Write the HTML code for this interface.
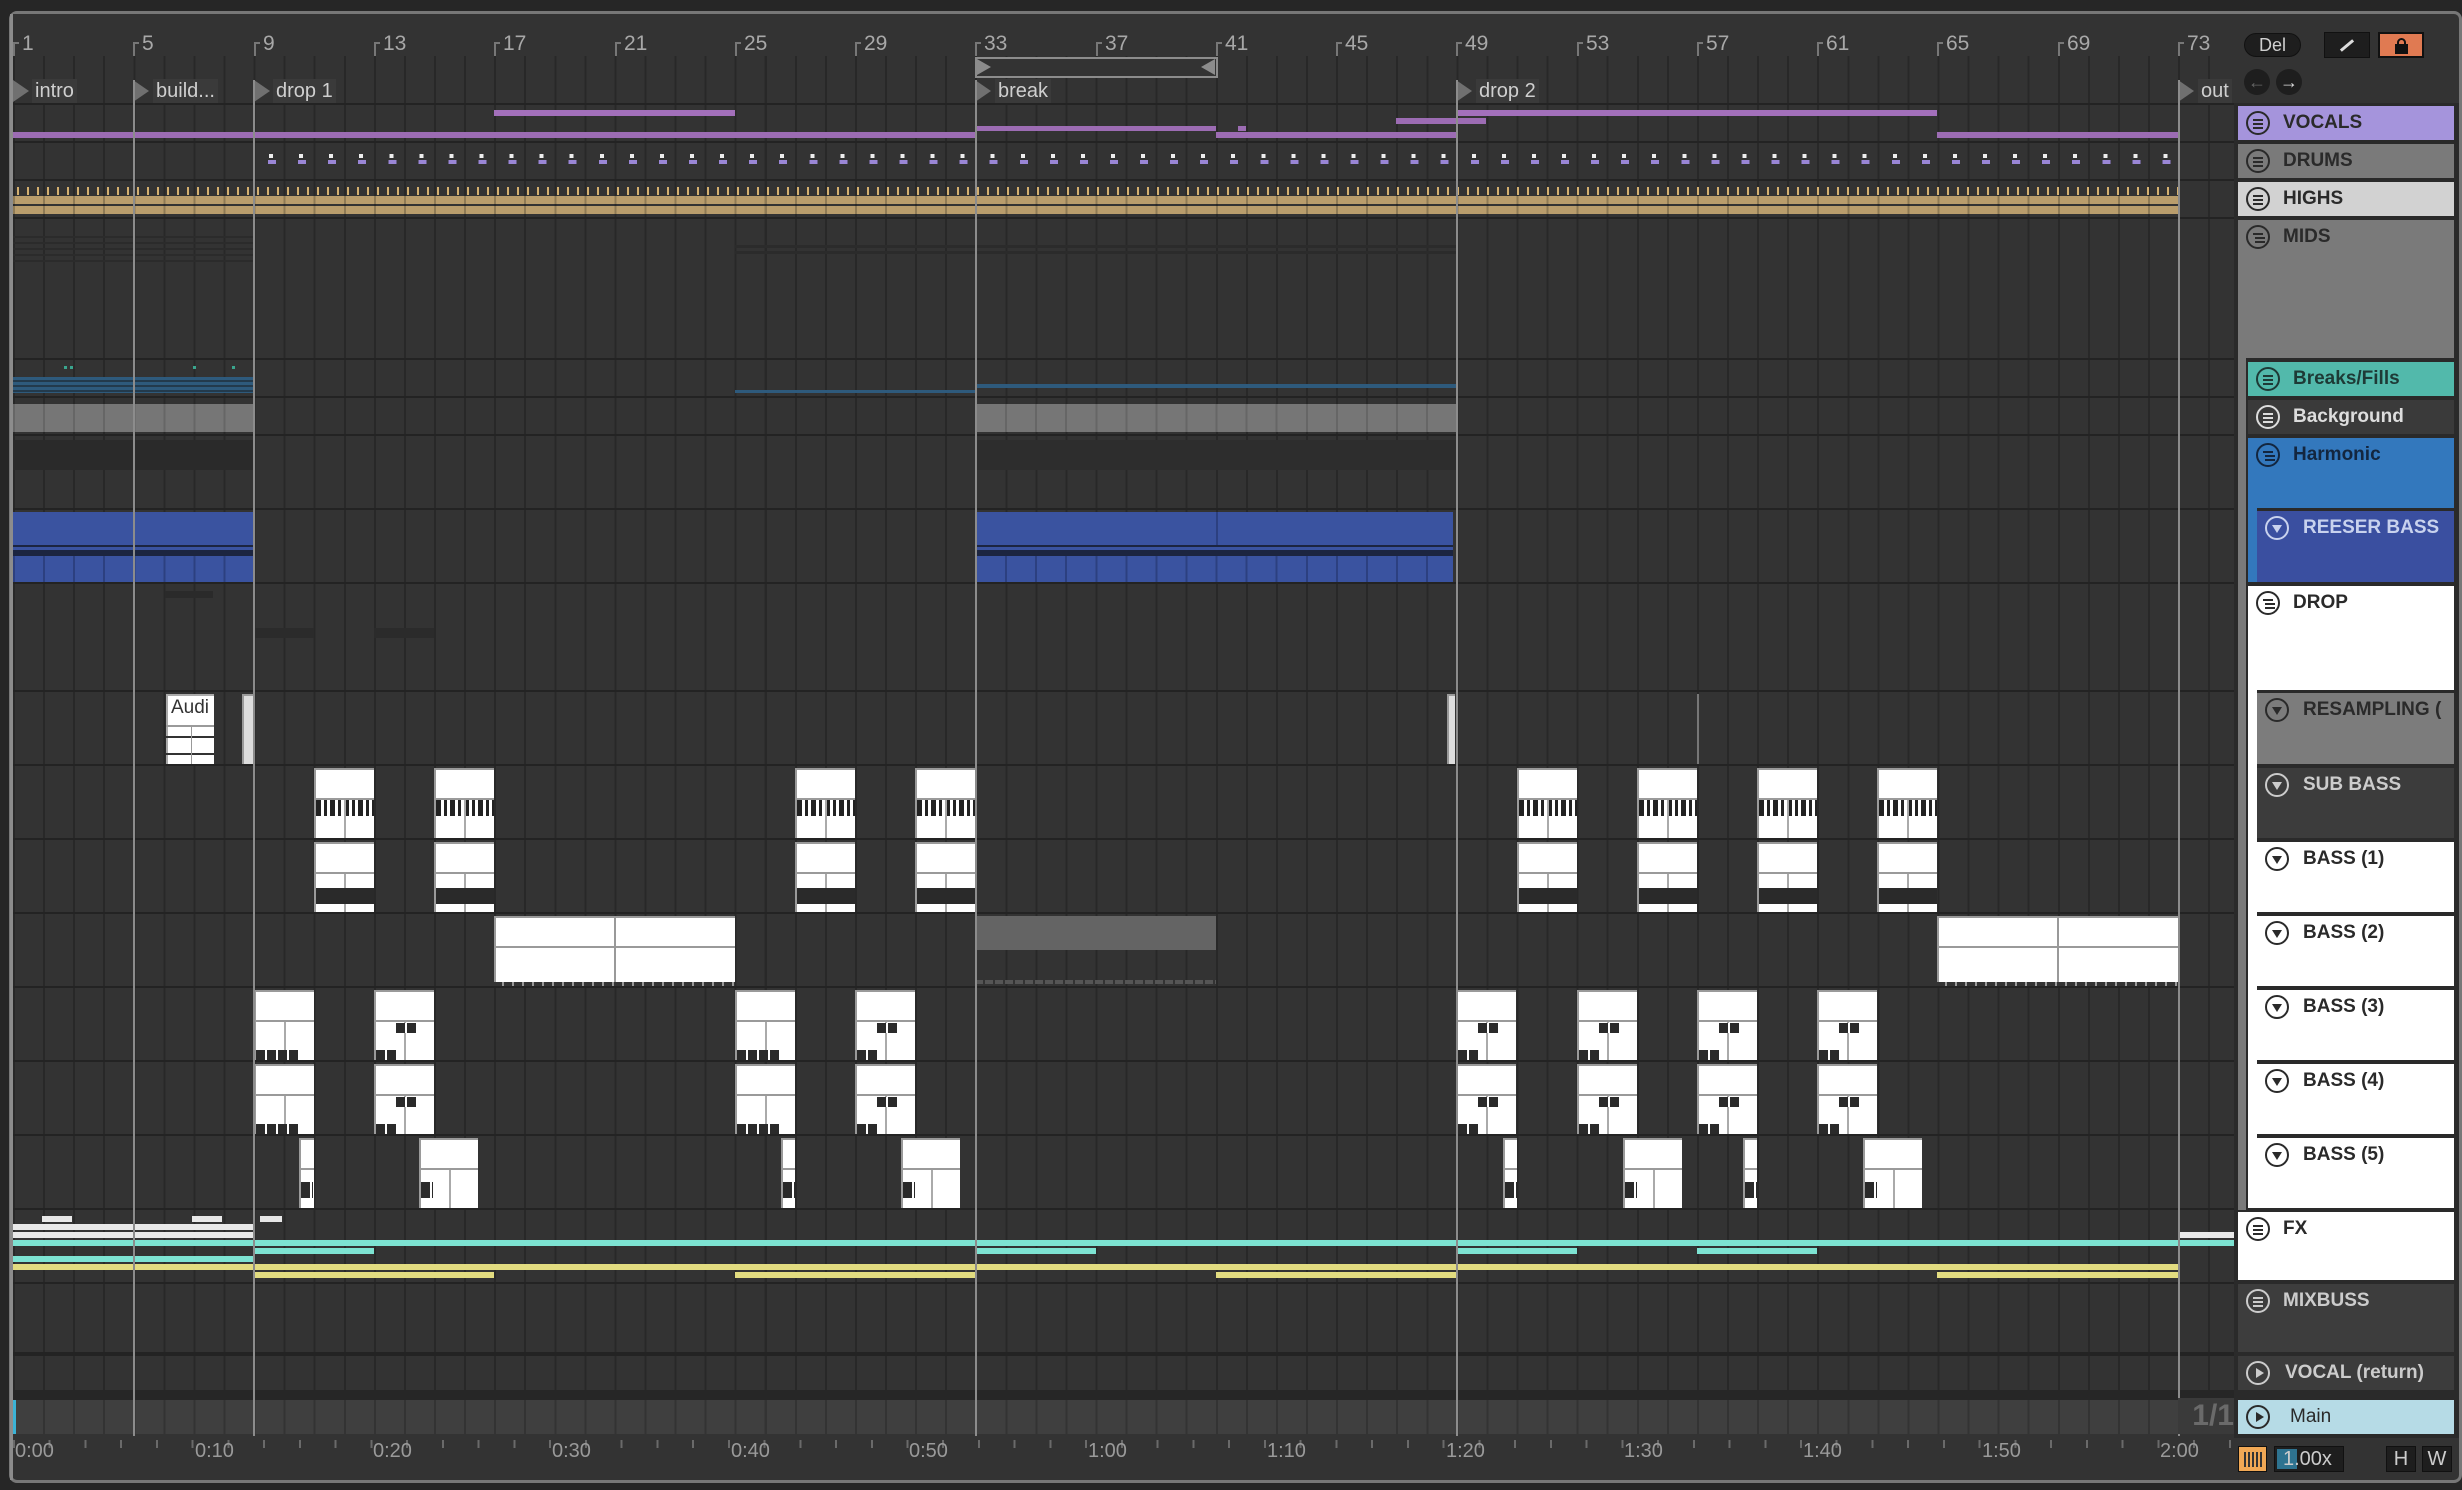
<!DOCTYPE html>
<html><head><meta charset="utf-8">
<style>
*{margin:0;padding:0;box-sizing:border-box}
body{width:2462px;height:1490px;background:#262626;position:relative;overflow:hidden;font-family:"Liberation Sans",sans-serif}
.a{position:absolute}
.row{position:absolute;left:13px;width:2221px;background:repeating-linear-gradient(90deg,#282828 0 2px,#333 2px 30.07px)}
.bn{position:absolute;top:32px;font-size:21px;color:#a8a8a8}
.tk{position:absolute;top:42px;width:6px;height:14px;border-left:2px solid #777;border-top:2px solid #777}
.loc{position:absolute;top:80px;width:0;height:0;border-top:11px solid transparent;border-bottom:11px solid transparent;border-left:16px solid #707070}
.ll{position:absolute;top:79px;height:24px;background:#3a3a3a;color:#cfcfcf;font-size:20px;padding:0 3px;line-height:24px}
.vl{position:absolute;top:80px;width:2px;height:1356px;background:#8c8c8c}
.c{position:absolute;background:#fff;box-shadow:inset 2px 2px 0 #9a9a9a;overflow:hidden}
.c .h{position:absolute;left:0;right:0;top:30px;height:2px;background:#9a9a9a}
.c .m{position:absolute;top:32px;bottom:0;left:50%;width:2px;background:#aaa}
.c .k{position:absolute;left:2px;right:0;top:32px;height:16px;background:repeating-linear-gradient(90deg,#222 0 5px,#fff 5px 8px,#222 8px 11px,#fff 11px 14px)}
.c .d{position:absolute;left:2px;right:0;top:46px;height:16px;background:#2a2a2a}
.c .s{position:absolute;height:10px;background:repeating-linear-gradient(90deg,#2a2a2a 0 9px,#fff 9px 11px)}
.hd{position:absolute;height:34px;font-weight:bold;font-size:19px;color:#2a2a2a;line-height:34px}
.ic{position:absolute;width:24px;height:24px;border:2px solid #2a2a2a;border-radius:50%;top:5px}
.ic i{position:absolute;left:5px;width:10px;height:2px;background:currentColor}
.tri{position:absolute;left:5px;top:7px;border-left:5px solid transparent;border-right:5px solid transparent;border-top:8px solid currentColor}
.ply{position:absolute;left:8px;top:5px;border-top:5px solid transparent;border-bottom:5px solid transparent;border-left:8px solid currentColor}
.tl{position:absolute;top:1440px;font-size:20px;color:#9a9a9a}
</style></head><body>
<!-- frame -->
<div class="a" style="left:9px;top:11px;width:2453px;height:1472px;border:3px solid #777;border-radius:8px;background:#333"></div>
<div class="a" style="left:12px;top:14px;width:2222px;height:90px;background:#333"></div>
<!-- ruler ticks -->
<div class="a" style="left:13px;top:56px;width:2221px;height:24px;background:repeating-linear-gradient(90deg,#282828 0 2px,#333 2px 30.07px)"></div>
<div class="a" style="left:13px;top:80px;width:2221px;height:23px;background:repeating-linear-gradient(90deg,#282828 0 2px,#333 2px 30.07px)"></div>
<div class="tk" style="left:13px"></div><div class="bn" style="left:22px">1</div>
<div class="tk" style="left:133px"></div><div class="bn" style="left:142px">5</div>
<div class="tk" style="left:254px"></div><div class="bn" style="left:263px">9</div>
<div class="tk" style="left:374px"></div><div class="bn" style="left:383px">13</div>
<div class="tk" style="left:494px"></div><div class="bn" style="left:503px">17</div>
<div class="tk" style="left:615px"></div><div class="bn" style="left:624px">21</div>
<div class="tk" style="left:735px"></div><div class="bn" style="left:744px">25</div>
<div class="tk" style="left:855px"></div><div class="bn" style="left:864px">29</div>
<div class="tk" style="left:975px"></div><div class="bn" style="left:984px">33</div>
<div class="tk" style="left:1096px"></div><div class="bn" style="left:1105px">37</div>
<div class="tk" style="left:1216px"></div><div class="bn" style="left:1225px">41</div>
<div class="tk" style="left:1336px"></div><div class="bn" style="left:1345px">45</div>
<div class="tk" style="left:1456px"></div><div class="bn" style="left:1465px">49</div>
<div class="tk" style="left:1577px"></div><div class="bn" style="left:1586px">53</div>
<div class="tk" style="left:1697px"></div><div class="bn" style="left:1706px">57</div>
<div class="tk" style="left:1817px"></div><div class="bn" style="left:1826px">61</div>
<div class="tk" style="left:1937px"></div><div class="bn" style="left:1946px">65</div>
<div class="tk" style="left:2058px"></div><div class="bn" style="left:2067px">69</div>
<div class="tk" style="left:2178px"></div><div class="bn" style="left:2187px">73</div>
<!-- loop brace -->
<div class="a" style="left:975px;top:57px;width:243px;height:21px;border:2px solid #8c8c8c;background:#333"></div>
<div class="a" style="left:977px;top:59px;border-top:8px solid transparent;border-bottom:8px solid transparent;border-left:14px solid #8c8c8c"></div>
<div class="a" style="left:1201px;top:59px;border-top:8px solid transparent;border-bottom:8px solid transparent;border-right:14px solid #8c8c8c"></div>
<!-- locators -->
<div class="loc" style="left:13px"></div><div class="ll" style="left:32px">intro</div>
<div class="loc" style="left:133px"></div><div class="ll" style="left:153px">build...</div>
<div class="loc" style="left:254px"></div><div class="ll" style="left:273px">drop 1</div>
<div class="loc" style="left:975px"></div><div class="ll" style="left:995px">break</div>
<div class="loc" style="left:1456px"></div><div class="ll" style="left:1476px">drop 2</div>
<div class="loc" style="left:2178px"></div><div class="ll" style="left:2198px">out</div>

<!-- track area -->
<div class="a" style="left:13px;top:103px;width:2221px;height:1331px;background:#232323"></div>
<div class="row" style="top:105px;height:36px"></div>
<div class="row" style="top:143px;height:36px"></div>
<div class="row" style="top:181px;height:36px"></div>
<div class="row" style="top:219px;height:139px"></div>
<div class="row" style="top:360px;height:36px"></div>
<div class="row" style="top:398px;height:36px"></div>
<div class="row" style="top:436px;height:72px"></div>
<div class="row" style="top:510px;height:72px"></div>
<div class="row" style="top:584px;height:106px"></div>
<div class="row" style="top:692px;height:72px"></div>
<div class="row" style="top:766px;height:72px"></div>
<div class="row" style="top:840px;height:72px"></div>
<div class="row" style="top:914px;height:72px"></div>
<div class="row" style="top:988px;height:72px"></div>
<div class="row" style="top:1062px;height:72px"></div>
<div class="row" style="top:1136px;height:72px"></div>
<div class="row" style="top:1210px;height:72px"></div>
<div class="row" style="top:1284px;height:68px"></div>
<div class="row" style="top:1356px;height:34px"></div>
<div class="a" style="left:13px;top:1390px;width:2221px;height:10px;background:#262626"></div>
<div class="row" style="top:1400px;height:34px;background:repeating-linear-gradient(90deg,#333 0 2px,#3f3f3f 2px 30.07px)"></div>
<div class="a" style="left:13px;top:1400px;width:3px;height:34px;background:#3bb3d6"></div>

<!-- VOCALS -->
<div class="a" style="left:13px;top:132px;width:722px;height:6px;background:#9c6cb3"></div>
<div class="a" style="left:494px;top:110px;width:241px;height:6px;background:#a370bb"></div>
<div class="a" style="left:735px;top:132px;width:240px;height:6px;background:#9c6cb3"></div>
<div class="a" style="left:975px;top:126px;width:241px;height:5px;background:#9c6cb3"></div>
<div class="a" style="left:1238px;top:126px;width:8px;height:5px;background:#9c6cb3"></div>
<div class="a" style="left:1216px;top:132px;width:240px;height:6px;background:#9c6cb3"></div>
<div class="a" style="left:1396px;top:118px;width:90px;height:6px;background:#9c6cb3"></div>
<div class="a" style="left:1456px;top:110px;width:481px;height:6px;background:#a370bb"></div>
<div class="a" style="left:1937px;top:132px;width:241px;height:6px;background:#9c6cb3"></div>
<!-- DRUMS -->
<div class="a" style="left:254px;top:154px;width:1924px;height:4px;background:repeating-linear-gradient(90deg,transparent 0 15px,#eee 15px 19px,transparent 19px 30.07px)"></div>
<div class="a" style="left:254px;top:160px;width:1924px;height:4px;background:repeating-linear-gradient(90deg,transparent 0 14px,#9a86d6 14px 22px,transparent 22px 30.07px)"></div>
<!-- HIGHS -->
<div class="a" style="left:13px;top:187px;width:2165px;height:8px;background:repeating-linear-gradient(90deg,transparent 0 4px,#d4b070 4px 6px,transparent 6px 10px)"></div>
<div class="a" style="left:13px;top:196px;width:2165px;height:8px;background:repeating-linear-gradient(90deg,#8e7a55 0 2px,#b99d6c 2px 30.07px)"></div>
<div class="a" style="left:13px;top:206px;width:2165px;height:8px;background:repeating-linear-gradient(90deg,#8e7a55 0 2px,#b99d6c 2px 30.07px)"></div>
<!-- MIDS faint -->
<div class="a" style="left:13px;top:236px;width:241px;height:30px;background:repeating-linear-gradient(180deg,#2b2b2b 0 2px,transparent 2px 6px)"></div>
<div class="a" style="left:735px;top:245px;width:721px;height:12px;background:repeating-linear-gradient(180deg,#2b2b2b 0 3px,transparent 3px 6px)"></div>
<!-- Breaks -->
<div class="a" style="left:13px;top:377px;width:241px;height:16px;background:repeating-linear-gradient(180deg,#2e5a7c 0 3px,#233a4c 3px 5px)"></div>
<div class="a" style="left:64px;top:366px;width:3px;height:3px;background:#3aa58e"></div>
<div class="a" style="left:70px;top:366px;width:3px;height:3px;background:#3aa58e"></div>
<div class="a" style="left:193px;top:366px;width:3px;height:3px;background:#3aa58e"></div>
<div class="a" style="left:232px;top:366px;width:3px;height:3px;background:#3aa58e"></div>
<div class="a" style="left:735px;top:390px;width:240px;height:3px;background:#2e5a7c"></div>
<div class="a" style="left:975px;top:384px;width:481px;height:4px;background:#2e5a7c"></div>
<!-- Background -->
<div class="a" style="left:13px;top:404px;width:241px;height:28px;background:repeating-linear-gradient(90deg,#666 0 2px,#767676 2px 30.07px)"></div>
<div class="a" style="left:975px;top:404px;width:481px;height:28px;background:repeating-linear-gradient(90deg,#666 0 2px,#767676 2px 30.07px)"></div>
<div class="a" style="left:13px;top:440px;width:241px;height:30px;background:#2a2a2a"></div>
<div class="a" style="left:975px;top:440px;width:481px;height:30px;background:#2d2d2d"></div>
<!-- REESER -->
<div class="a" style="left:13px;top:512px;width:241px;height:33px;background:#3a53a0"></div>
<div class="a" style="left:13px;top:545px;width:241px;height:11px;background:repeating-linear-gradient(180deg,#1c2540 0 2px,#3a53a0 2px 5px,#1c2540 5px 11px)"></div>
<div class="a" style="left:13px;top:556px;width:241px;height:26px;background:repeating-linear-gradient(90deg,#2c4080 0 2px,#3a53a0 2px 30.07px)"></div>
<div class="a" style="left:975px;top:512px;width:478px;height:33px;background:#3a53a0"></div>
<div class="a" style="left:975px;top:545px;width:478px;height:11px;background:repeating-linear-gradient(180deg,#1c2540 0 2px,#3a53a0 2px 5px,#1c2540 5px 11px)"></div>
<div class="a" style="left:975px;top:556px;width:478px;height:26px;background:repeating-linear-gradient(90deg,#2c4080 0 2px,#3a53a0 2px 30.07px)"></div>
<div class="a" style="left:1216px;top:512px;width:2px;height:33px;background:#2c4080"></div>
<!-- DROP faint -->
<div class="a" style="left:165px;top:591px;width:48px;height:7px;background:#2a2a2a"></div>
<div class="a" style="left:254px;top:628px;width:60px;height:10px;background:#2b2b2b"></div>
<div class="a" style="left:374px;top:628px;width:60px;height:10px;background:#2b2b2b"></div>
<!-- RESAMPLING audio clips -->
<div class="c" style="left:166px;top:694px;width:48px;height:70px;box-shadow:inset 2px 2px 0 #aaa">
<div class="a" style="left:5px;top:3px;font-size:19px;color:#333">Audi</div><div class="h" style="top:31px"></div>
<div class="a" style="left:0;right:0;top:42px;height:2px;background:#333"></div><div class="a" style="left:0;right:0;top:59px;height:2px;background:#333"></div><div class="a" style="left:25px;top:33px;bottom:0;width:1px;background:#999"></div></div>
<div class="c" style="left:242px;top:694px;width:12px;height:70px;background:#ddd"></div>
<div class="c" style="left:1447px;top:694px;width:8px;height:70px;background:#ddd"></div>
<div class="a" style="left:1697px;top:694px;width:2px;height:70px;background:#777"></div>

<!-- SUB BASS piano clips -->
<div class="c" style="left:314px;top:768px;width:60px;height:70px"><div class="h"></div><div class="k"></div><div class="m"></div></div>
<div class="c" style="left:434px;top:768px;width:60px;height:70px"><div class="h"></div><div class="k"></div><div class="m"></div></div>
<div class="c" style="left:795px;top:768px;width:60px;height:70px"><div class="h"></div><div class="k"></div><div class="m"></div></div>
<div class="c" style="left:915px;top:768px;width:60px;height:70px"><div class="h"></div><div class="k"></div><div class="m"></div></div>
<div class="c" style="left:1517px;top:768px;width:60px;height:70px"><div class="h"></div><div class="k"></div><div class="m"></div></div>
<div class="c" style="left:1637px;top:768px;width:60px;height:70px"><div class="h"></div><div class="k"></div><div class="m"></div></div>
<div class="c" style="left:1757px;top:768px;width:60px;height:70px"><div class="h"></div><div class="k"></div><div class="m"></div></div>
<div class="c" style="left:1877px;top:768px;width:60px;height:70px"><div class="h"></div><div class="k"></div><div class="m"></div></div>
<!-- BASS1 -->
<div class="c" style="left:314px;top:842px;width:60px;height:70px"><div class="h"></div><div class="m"></div><div class="d"></div></div>
<div class="c" style="left:434px;top:842px;width:60px;height:70px"><div class="h"></div><div class="m"></div><div class="d"></div></div>
<div class="c" style="left:795px;top:842px;width:60px;height:70px"><div class="h"></div><div class="m"></div><div class="d"></div></div>
<div class="c" style="left:915px;top:842px;width:60px;height:70px"><div class="h"></div><div class="m"></div><div class="d"></div></div>
<div class="c" style="left:1517px;top:842px;width:60px;height:70px"><div class="h"></div><div class="m"></div><div class="d"></div></div>
<div class="c" style="left:1637px;top:842px;width:60px;height:70px"><div class="h"></div><div class="m"></div><div class="d"></div></div>
<div class="c" style="left:1757px;top:842px;width:60px;height:70px"><div class="h"></div><div class="m"></div><div class="d"></div></div>
<div class="c" style="left:1877px;top:842px;width:60px;height:70px"><div class="h"></div><div class="m"></div><div class="d"></div></div>
<!-- BASS2 -->
<div class="c" style="left:494px;top:916px;width:241px;height:70px"><div class="h"></div><div class="a" style="left:120px;top:0;bottom:0;width:2px;background:#999"></div><div class="a" style="left:0;right:0;bottom:0;height:4px;background:repeating-linear-gradient(90deg,#333 0 8px,#999 8px 10px)"></div></div>
<div class="a" style="left:975px;top:916px;width:241px;height:34px;background:#646464"></div>
<div class="a" style="left:975px;top:980px;width:241px;height:4px;background:repeating-linear-gradient(90deg,#555 0 8px,#333 8px 10px)"></div>
<div class="c" style="left:1937px;top:916px;width:241px;height:70px"><div class="h"></div><div class="a" style="left:120px;top:0;bottom:0;width:2px;background:#999"></div><div class="a" style="left:0;right:0;bottom:0;height:4px;background:repeating-linear-gradient(90deg,#333 0 8px,#999 8px 10px)"></div></div>
<!-- BASS3 -->
<div class="c" style="left:254px;top:990px;width:60px;height:70px"><div class="h"></div><div class="m"></div><div class="s" style="left:2px;top:60px;width:44px"></div></div>
<div class="c" style="left:374px;top:990px;width:60px;height:70px"><div class="h"></div><div class="m"></div><div class="s" style="left:22px;top:33px;width:22px"></div><div class="s" style="left:2px;top:60px;width:22px"></div></div>
<div class="c" style="left:735px;top:990px;width:60px;height:70px"><div class="h"></div><div class="m"></div><div class="s" style="left:2px;top:60px;width:44px"></div></div>
<div class="c" style="left:855px;top:990px;width:60px;height:70px"><div class="h"></div><div class="m"></div><div class="s" style="left:22px;top:33px;width:22px"></div><div class="s" style="left:2px;top:60px;width:22px"></div></div>
<div class="c" style="left:1456px;top:990px;width:60px;height:70px"><div class="h"></div><div class="m"></div><div class="s" style="left:22px;top:33px;width:22px"></div><div class="s" style="left:2px;top:60px;width:22px"></div></div>
<div class="c" style="left:1577px;top:990px;width:60px;height:70px"><div class="h"></div><div class="m"></div><div class="s" style="left:22px;top:33px;width:22px"></div><div class="s" style="left:2px;top:60px;width:22px"></div></div>
<div class="c" style="left:1697px;top:990px;width:60px;height:70px"><div class="h"></div><div class="m"></div><div class="s" style="left:22px;top:33px;width:22px"></div><div class="s" style="left:2px;top:60px;width:22px"></div></div>
<div class="c" style="left:1817px;top:990px;width:60px;height:70px"><div class="h"></div><div class="m"></div><div class="s" style="left:22px;top:33px;width:22px"></div><div class="s" style="left:2px;top:60px;width:22px"></div></div>
<!-- BASS4 -->
<div class="c" style="left:254px;top:1064px;width:60px;height:70px"><div class="h"></div><div class="m"></div><div class="s" style="left:2px;top:60px;width:44px"></div></div>
<div class="c" style="left:374px;top:1064px;width:60px;height:70px"><div class="h"></div><div class="m"></div><div class="s" style="left:22px;top:33px;width:22px"></div><div class="s" style="left:2px;top:60px;width:22px"></div></div>
<div class="c" style="left:735px;top:1064px;width:60px;height:70px"><div class="h"></div><div class="m"></div><div class="s" style="left:2px;top:60px;width:44px"></div></div>
<div class="c" style="left:855px;top:1064px;width:60px;height:70px"><div class="h"></div><div class="m"></div><div class="s" style="left:22px;top:33px;width:22px"></div><div class="s" style="left:2px;top:60px;width:22px"></div></div>
<div class="c" style="left:1456px;top:1064px;width:60px;height:70px"><div class="h"></div><div class="m"></div><div class="s" style="left:22px;top:33px;width:22px"></div><div class="s" style="left:2px;top:60px;width:22px"></div></div>
<div class="c" style="left:1577px;top:1064px;width:60px;height:70px"><div class="h"></div><div class="m"></div><div class="s" style="left:22px;top:33px;width:22px"></div><div class="s" style="left:2px;top:60px;width:22px"></div></div>
<div class="c" style="left:1697px;top:1064px;width:60px;height:70px"><div class="h"></div><div class="m"></div><div class="s" style="left:22px;top:33px;width:22px"></div><div class="s" style="left:2px;top:60px;width:22px"></div></div>
<div class="c" style="left:1817px;top:1064px;width:60px;height:70px"><div class="h"></div><div class="m"></div><div class="s" style="left:22px;top:33px;width:22px"></div><div class="s" style="left:2px;top:60px;width:22px"></div></div>
<!-- BASS5 -->
<div class="c" style="left:299px;top:1138px;width:15px;height:70px"><div class="h"></div><div class="s" style="left:2px;top:44px;width:12px;height:16px"></div></div>
<div class="c" style="left:419px;top:1138px;width:59px;height:70px"><div class="h"></div><div class="m"></div><div class="s" style="left:2px;top:44px;width:12px;height:16px"></div></div>
<div class="c" style="left:781px;top:1138px;width:14px;height:70px"><div class="h"></div><div class="s" style="left:2px;top:44px;width:12px;height:16px"></div></div>
<div class="c" style="left:901px;top:1138px;width:59px;height:70px"><div class="h"></div><div class="m"></div><div class="s" style="left:2px;top:44px;width:12px;height:16px"></div></div>
<div class="c" style="left:1503px;top:1138px;width:14px;height:70px"><div class="h"></div><div class="s" style="left:2px;top:44px;width:12px;height:16px"></div></div>
<div class="c" style="left:1623px;top:1138px;width:59px;height:70px"><div class="h"></div><div class="m"></div><div class="s" style="left:2px;top:44px;width:12px;height:16px"></div></div>
<div class="c" style="left:1743px;top:1138px;width:14px;height:70px"><div class="h"></div><div class="s" style="left:2px;top:44px;width:12px;height:16px"></div></div>
<div class="c" style="left:1863px;top:1138px;width:59px;height:70px"><div class="h"></div><div class="m"></div><div class="s" style="left:2px;top:44px;width:12px;height:16px"></div></div>
<!-- FX -->
<div class="a" style="left:42px;top:1216px;width:30px;height:6px;background:#e8e8e8"></div>
<div class="a" style="left:192px;top:1216px;width:30px;height:6px;background:#e8e8e8"></div>
<div class="a" style="left:260px;top:1216px;width:22px;height:6px;background:#e8e8e8"></div>
<div class="a" style="left:13px;top:1224px;width:240px;height:6px;background:#e8e8e8"></div>
<div class="a" style="left:13px;top:1232px;width:240px;height:6px;background:#e8e8e8"></div>
<div class="a" style="left:13px;top:1240px;width:2165px;height:6px;background:#7de3d2"></div>
<div class="a" style="left:254px;top:1248px;width:120px;height:6px;background:#7de3d2"></div>
<div class="a" style="left:975px;top:1248px;width:121px;height:6px;background:#7de3d2"></div>
<div class="a" style="left:1456px;top:1248px;width:121px;height:6px;background:#7de3d2"></div>
<div class="a" style="left:1697px;top:1248px;width:120px;height:6px;background:#7de3d2"></div>
<div class="a" style="left:13px;top:1256px;width:240px;height:6px;background:#7de3d2"></div>
<div class="a" style="left:13px;top:1264px;width:2165px;height:6px;background:#e2dc80"></div>
<div class="a" style="left:254px;top:1272px;width:240px;height:6px;background:#e2dc80"></div>
<div class="a" style="left:735px;top:1272px;width:240px;height:6px;background:#e2dc80"></div>
<div class="a" style="left:1216px;top:1272px;width:240px;height:6px;background:#e2dc80"></div>
<div class="a" style="left:1937px;top:1272px;width:241px;height:6px;background:#e2dc80"></div>
<div class="a" style="left:2178px;top:1232px;width:56px;height:6px;background:#e8e8e8"></div>
<div class="a" style="left:2178px;top:1240px;width:56px;height:6px;background:#7de3d2"></div>

<!-- locator lines -->
<div class="a" style="left:10px;top:14px;width:3px;height:1466px;background:#8c8c8c"></div>
<div class="vl" style="left:133px"></div>
<div class="vl" style="left:253px"></div>
<div class="vl" style="left:975px"></div>
<div class="vl" style="left:1456px"></div>
<div class="vl" style="left:2178px"></div>

<div class="a" style="left:2178px;top:1398px;width:56px;height:36px;background:#3a3a3a;color:#6a6a6a;font-size:30px;font-weight:bold;text-align:right;line-height:36px">1/1</div>

<!-- time ruler -->
<div class="a" style="left:13px;top:1436px;width:2221px;height:12px;background:repeating-linear-gradient(90deg,#6a6a6a 0 2px,transparent 2px 35.74px)"></div>
<div class="a" style="left:13px;top:1436px;width:2221px;height:4px;background:#333"></div>
<div class="tl" style="left:15px">0:00</div><div class="tl" style="left:195px">0:10</div><div class="tl" style="left:373px">0:20</div>
<div class="tl" style="left:552px">0:30</div><div class="tl" style="left:731px">0:40</div><div class="tl" style="left:909px">0:50</div>
<div class="tl" style="left:1088px">1:00</div><div class="tl" style="left:1267px">1:10</div><div class="tl" style="left:1446px">1:20</div>
<div class="tl" style="left:1624px">1:30</div><div class="tl" style="left:1803px">1:40</div><div class="tl" style="left:1982px">1:50</div>
<div class="tl" style="left:2160px">2:00</div>

<!-- right panel -->
<div class="a" style="left:2234px;top:103px;width:225px;height:1335px;background:#2a2a2a"></div>
<div class="a" style="left:2244px;top:33px;width:57px;height:24px;border-radius:12px;background:#1e1e1e;border:1px solid #111;color:#d0d0d0;font-size:18px;text-align:center;line-height:22px">Del</div>
<div class="a" style="left:2324px;top:32px;width:46px;height:26px;background:#1e1e1e;border:1px solid #111"><div class="a" style="left:14px;top:11px;width:16px;height:3px;background:#ddd;transform:rotate(-40deg)"></div></div>
<div class="a" style="left:2378px;top:32px;width:46px;height:26px;background:#e07a52;border:2px solid #111"><div class="a" style="left:15px;top:10px;width:13px;height:10px;background:#111"></div><div class="a" style="left:17px;top:4px;width:9px;height:9px;border:2px solid #111;border-radius:5px 5px 0 0"></div></div>
<div class="a" style="left:2244px;top:69px;width:26px;height:26px;border-radius:50%;background:#1e1e1e;color:#666;font-size:18px;text-align:center;line-height:26px">&#8592;</div>
<div class="a" style="left:2276px;top:69px;width:26px;height:26px;border-radius:50%;background:#1e1e1e;color:#ddd;font-size:18px;text-align:center;line-height:26px">&#8594;</div>

<!-- group stripes -->
<div class="a" style="left:2238px;top:220px;width:216px;height:138px;background:#7a7a7a"></div>
<div class="a" style="left:2238px;top:358px;width:8px;height:852px;background:#7a7a7a"></div>
<div class="a" style="left:2248px;top:438px;width:206px;height:144px;background:#3378bd"></div>
<div class="a" style="left:2248px;top:586px;width:9px;height:622px;background:#fff"></div>

<div class="hd" style="left:2238px;top:106px;width:216px;background:#a594dc"><div class="ic" style="left:8px;color:#2a2a2a"><i style="top:6px"></i><i style="top:10px"></i><i style="top:14px"></i></div><span style="position:absolute;left:45px">VOCALS</span></div>
<div class="hd" style="left:2238px;top:144px;width:216px;background:#7a7a7a"><div class="ic" style="left:8px;color:#2a2a2a"><i style="top:6px"></i><i style="top:10px"></i><i style="top:14px"></i></div><span style="position:absolute;left:45px">DRUMS</span></div>
<div class="hd" style="left:2238px;top:182px;width:216px;background:#d2d2d2"><div class="ic" style="left:8px;color:#2a2a2a"><i style="top:6px"></i><i style="top:10px"></i><i style="top:14px"></i></div><span style="position:absolute;left:45px">HIGHS</span></div>
<div class="hd" style="left:2238px;top:220px;width:216px"><div class="ic" style="left:8px;color:#2a2a2a"><i style="top:6px"></i><i style="top:10px;left:7px"></i><i style="top:14px;left:7px"></i></div><span style="position:absolute;left:45px">MIDS</span></div>
<div class="a" style="left:2246px;top:358px;width:208px;height:4px;background:#2a2a2a"></div>
<div class="hd" style="left:2248px;top:362px;width:206px;background:#52b9ab"><div class="ic" style="left:8px;color:#1e3a36;border-color:#1e3a36"><i style="top:6px"></i><i style="top:10px"></i><i style="top:14px"></i></div><span style="position:absolute;left:45px;color:#1e3a36">Breaks/Fills</span></div>
<div class="hd" style="left:2248px;top:400px;width:206px;background:#3a3a3a;color:#ddd"><div class="ic" style="left:8px;color:#ddd;border-color:#ddd"><i style="top:6px"></i><i style="top:10px"></i><i style="top:14px"></i></div><span style="position:absolute;left:45px">Background</span></div>
<div class="hd" style="left:2248px;top:438px;width:206px;color:#13263f"><div class="ic" style="left:8px;color:#13263f;border-color:#13263f"><i style="top:6px"></i><i style="top:10px;left:7px"></i><i style="top:14px;left:7px"></i></div><span style="position:absolute;left:45px">Harmonic</span></div>
<div class="a" style="left:2257px;top:508px;width:197px;height:3px;background:#2a2a2a"></div>
<div class="hd" style="left:2257px;top:511px;width:197px;height:71px;background:#3a4fa0;color:#c8d2ee"><div class="ic" style="left:8px;color:#c8d2ee;border-color:#c8d2ee"><div class="tri"></div></div><span style="position:absolute;left:46px">REESER BASS</span></div>
<div class="hd" style="left:2248px;top:586px;width:206px;height:104px;background:#fff"><div class="ic" style="left:8px;color:#2a2a2a"><i style="top:6px"></i><i style="top:10px;left:7px"></i><i style="top:14px;left:7px"></i></div><span style="position:absolute;left:45px">DROP</span></div>
<div class="a" style="left:2257px;top:690px;width:197px;height:3px;background:#2a2a2a"></div>
<div class="hd" style="left:2257px;top:693px;width:197px;height:71px;background:#7c7c7c"><div class="ic" style="left:8px;color:#2a2a2a"><div class="tri"></div></div><span style="position:absolute;left:46px">RESAMPLING (</span></div>
<div class="hd" style="left:2257px;top:768px;width:197px;height:70px;background:#3c3c3c;color:#ccc"><div class="ic" style="left:8px;color:#ccc;border-color:#ccc"><div class="tri"></div></div><span style="position:absolute;left:46px">SUB BASS</span></div>
<div class="hd" style="left:2257px;top:842px;width:197px;height:70px;background:#fff"><div class="ic" style="left:8px"><div class="tri"></div></div><span style="position:absolute;left:46px">BASS (1)</span></div>
<div class="hd" style="left:2257px;top:916px;width:197px;height:70px;background:#fff"><div class="ic" style="left:8px"><div class="tri"></div></div><span style="position:absolute;left:46px">BASS (2)</span></div>
<div class="hd" style="left:2257px;top:990px;width:197px;height:70px;background:#fff"><div class="ic" style="left:8px"><div class="tri"></div></div><span style="position:absolute;left:46px">BASS (3)</span></div>
<div class="hd" style="left:2257px;top:1064px;width:197px;height:70px;background:#fff"><div class="ic" style="left:8px"><div class="tri"></div></div><span style="position:absolute;left:46px">BASS (4)</span></div>
<div class="hd" style="left:2257px;top:1138px;width:197px;height:70px;background:#fff"><div class="ic" style="left:8px"><div class="tri"></div></div><span style="position:absolute;left:46px">BASS (5)</span></div>
<div class="hd" style="left:2238px;top:1212px;width:216px;height:68px;background:#fff"><div class="ic" style="left:8px"><i style="top:6px"></i><i style="top:10px"></i><i style="top:14px"></i></div><span style="position:absolute;left:45px">FX</span></div>
<div class="hd" style="left:2238px;top:1284px;width:216px;height:68px;background:#3d3d3d;color:#ccc"><div class="ic" style="left:8px;color:#ccc;border-color:#ccc"><i style="top:6px"></i><i style="top:10px"></i><i style="top:14px"></i></div><span style="position:absolute;left:45px">MIXBUSS</span></div>
<div class="hd" style="left:2238px;top:1356px;width:216px;background:#3c3c3c;color:#ccc"><div class="ic" style="left:8px;color:#ccc;border-color:#ccc"><div class="ply"></div></div><span style="position:absolute;left:47px">VOCAL (return)</span></div>
<div class="hd" style="left:2238px;top:1400px;width:216px;background:#b6dbe6;color:#2a2a2a"><div class="ic" style="left:8px"><div class="ply"></div></div><span style="position:absolute;left:52px;font-weight:normal">Main</span></div>

<!-- bottom controls -->
<div class="a" style="left:2238px;top:1446px;width:29px;height:26px;background:#f0a855;border:1px solid #111"><div class="a" style="left:5px;top:5px;width:18px;height:15px;background:repeating-linear-gradient(90deg,#333 0 2px,transparent 2px 4px)"></div></div>
<div class="a" style="left:2274px;top:1446px;width:70px;height:26px;background:#1e1e1e;border:1px solid #111;font-size:20px;color:#ccc;line-height:24px;padding-left:8px"><div class="a" style="left:2px;top:2px;width:20px;height:20px;background:#2e7390"></div><span style="position:relative">1.00x</span></div>
<div class="a" style="left:2386px;top:1446px;width:30px;height:26px;background:#1e1e1e;border:1px solid #111;color:#ccc;font-size:20px;text-align:center;line-height:24px">H</div>
<div class="a" style="left:2422px;top:1446px;width:30px;height:26px;background:#1e1e1e;border:1px solid #111;color:#ccc;font-size:20px;text-align:center;line-height:24px">W</div>
</body></html>
